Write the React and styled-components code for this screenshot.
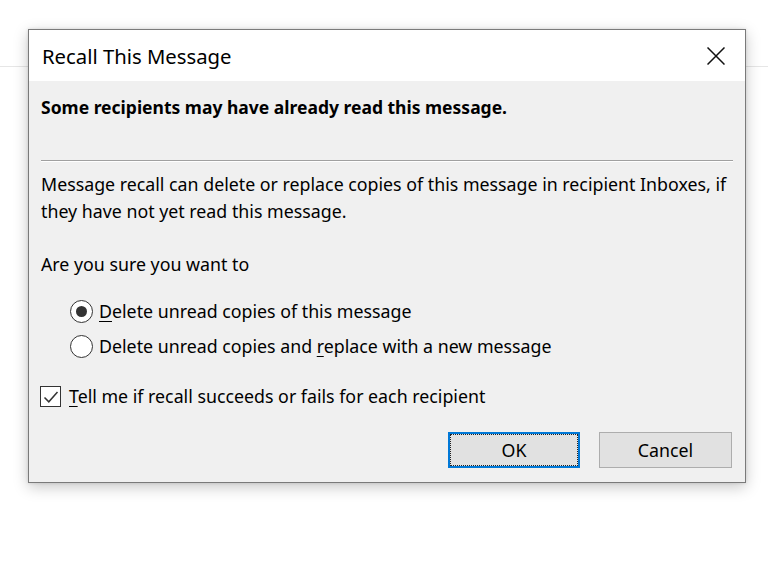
import React from "react";
import styled, { createGlobalStyle } from "styled-components";

const Global = createGlobalStyle`
  html, body { margin: 0; padding: 0; background: #fff; }
  body { font-family: "Noto Sans", "Open Sans", sans-serif; color: #000; }
  * { box-sizing: border-box; }
`;

const Page = styled.div`
  position: relative;
  width: 768px;
  height: 562px;
  overflow: hidden;
  background: #fff;
`;

const TopStrip = styled.div`
  height: 67px;
  border-bottom: 1px solid #e6e6e6;
`;

const Dialog = styled.div`
  position: absolute;
  left: 28px;
  top: 29px;
  width: 718px;
  height: 454px;
  border: 1px solid #7a7a7a;
  background: #f0f0f0;
  box-shadow: 0 4px 14px rgba(0, 0, 0, 0.22), 0 0 3px rgba(0, 0, 0, 0.12);
  display: flex;
  flex-direction: column;
`;

const TitleBar = styled.div`
  height: 51px;
  background: #fff;
  display: flex;
  align-items: center;
  justify-content: space-between;
  padding: 0 20px 0 13px;
`;

const Title = styled.div`
  font-size: 20.3px;
  line-height: 27px;
  padding-top: 1px;
`;

const Close = styled.button`
  border: 0;
  background: transparent;
  padding: 0;
  width: 18px;
  height: 18px;
  display: flex;
`;

const Body = styled.div`
  flex: 1;
  display: flex;
  flex-direction: column;
  padding: 13px 12px 14px 12px;
  font-size: 17.8px;
  line-height: 27px;
`;

const Heading = styled.div`
  font-weight: 700;
  font-size: 17.5px;
`;

const Separator = styled.div`
  margin-top: 39px;
  border-top: 1px solid #a0a0a0;
  border-bottom: 1px solid #fff;
`;

const Para = styled.p`
  margin: ${(p) => p.$mt}px 0 0 0;
`;

const RadioGroup = styled.div`
  margin-top: 16px;
  padding-left: 29px;
  display: flex;
  flex-direction: column;
`;

const Row = styled.label`
  display: flex;
  align-items: center;
  height: 35px;
  gap: ${(p) => p.$gap || 6}px;
`;

const RadioCircle = styled.span`
  width: 23px;
  height: 23px;
  border-radius: 50%;
  border: 1.5px solid #333;
  background: #fff;
  display: flex;
  align-items: center;
  justify-content: center;
  flex: none;
  &::after {
    content: "";
    width: 11px;
    height: 11px;
    border-radius: 50%;
    background: #333;
    display: ${(p) => (p.$checked ? "block" : "none")};
  }
`;

const CheckRow = styled(Row)`
  margin-top: 19px;
  height: 27px;
`;

const CheckBox = styled.span`
  width: 21px;
  height: 21px;
  border: 1.5px solid #333;
  background: #fff;
  display: flex;
  align-items: center;
  justify-content: center;
  flex: none;
  margin-left: -1px;
`;

const Key = styled.span`
  text-decoration: underline;
  text-underline-offset: 3px;
  text-decoration-thickness: 1px;
`;

const Buttons = styled.div`
  margin-top: auto;
  display: flex;
  justify-content: flex-end;
  gap: 19px;
  padding-right: 1px;
`;

const Button = styled.button`
  position: relative;
  width: ${(p) => p.$w}px;
  height: 36px;
  font-family: inherit;
  font-size: 17.8px;
  color: #000;
  background: #e1e1e1;
  border: 1px solid ${(p) => (p.$default ? "#0078d7" : "#adadad")};
  box-shadow: ${(p) => (p.$default ? "inset 0 0 0 1px #0078d7" : "none")};
  padding: 0;
  &::after {
    content: "";
    position: absolute;
    inset: 1px;
    border: 1px dotted #222;
    display: ${(p) => (p.$default ? "block" : "none")};
  }
`;

export default function App() {
  return (
    <Page>
      <Global />
      <TopStrip />
      <Dialog>
        <TitleBar>
          <Title>Recall This Message</Title>
          <Close aria-label="Close">
            <svg width="18" height="18" viewBox="0 0 18 18">
              <path d="M0.5 0.5 L17.5 17.5 M17.5 0.5 L0.5 17.5" stroke="#111" strokeWidth="1.5" fill="none" />
            </svg>
          </Close>
        </TitleBar>
        <Body>
          <Heading>Some recipients may have already read this message.</Heading>
          <Separator />
          <Para $mt={9}>
            Message recall can delete or replace copies of this message in recipient Inboxes, if
            <br />
            they have not yet read this message.
          </Para>
          <Para $mt={26}>Are you sure you want to</Para>
          <RadioGroup>
            <Row>
              <RadioCircle $checked />
              <span>
                <Key>D</Key>elete unread copies of this message
              </span>
            </Row>
            <Row>
              <RadioCircle />
              <span>
                Delete unread copies and <Key>r</Key>eplace with a new message
              </span>
            </Row>
          </RadioGroup>
          <CheckRow $gap={8}>
            <CheckBox>
              <svg width="16" height="14" viewBox="0 0 16 14">
                <path d="M1.5 7.5 L5.8 11.8 L14.5 2" stroke="#333" strokeWidth="1.5" fill="none" />
              </svg>
            </CheckBox>
            <span>
              <Key>T</Key>ell me if recall succeeds or fails for each recipient
            </span>
          </CheckRow>
          <Buttons>
            <Button $w={132} $default>OK</Button>
            <Button $w={133}>Cancel</Button>
          </Buttons>
        </Body>
      </Dialog>
    </Page>
  );
}
